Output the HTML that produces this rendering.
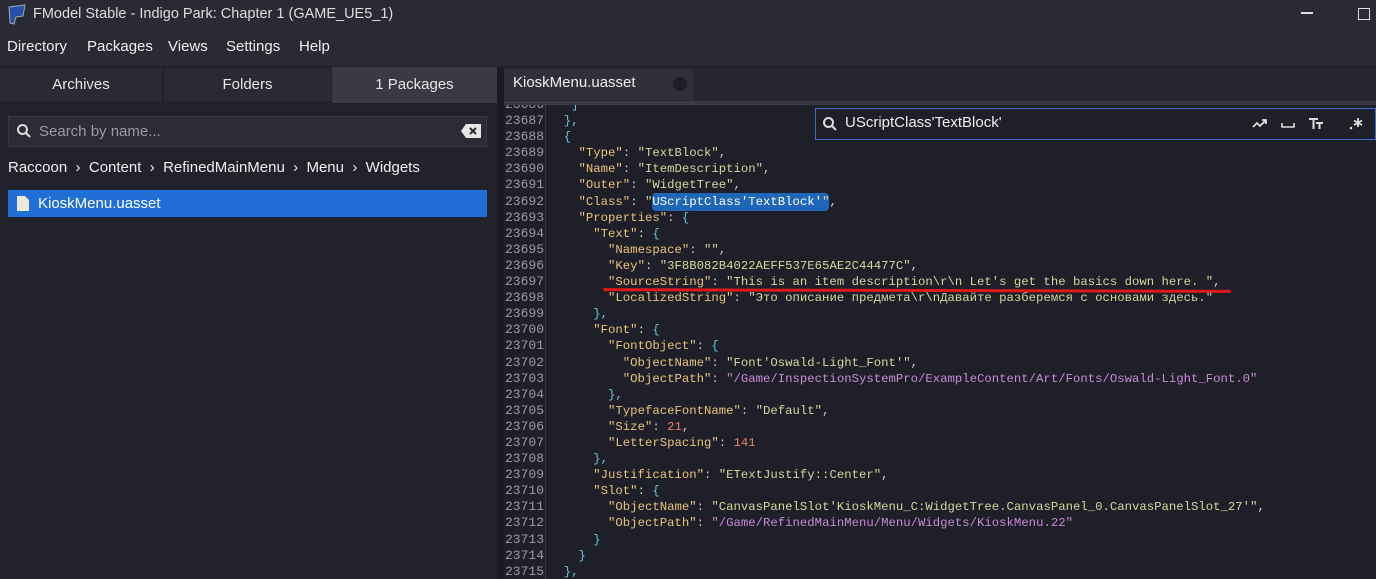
<!DOCTYPE html>
<html><head><meta charset="utf-8"><style>
*{margin:0;padding:0;box-sizing:border-box}
body{width:1376px;height:579px;overflow:hidden;background:#22222c;font-family:"Segoe UI","Liberation Sans",sans-serif;color:#e6e6e6;position:relative}
.abs{position:absolute}
.title{left:0;top:0;width:1376px;height:31px;background:#2a2a35}
.menu{left:0;top:31px;width:1376px;height:35px;background:#2a2a35}
.menu span{position:absolute;top:7px;font-size:15px;color:#eee}
.left{left:0;top:68px;width:497px;height:511px;background:#22222c}
.tab{position:absolute;top:0;height:33px;font-size:15px;text-align:center;line-height:33px}
.code{font-family:"Liberation Mono",monospace;font-size:12.3px;white-space:pre;line-height:16.1px}
.k{color:#e8c47a}.s{color:#d6d69c}.p{color:#c98ad6}.n{color:#e4806a}.b{color:#6ac4dc}.w{color:#ccc}
</style></head><body>
<div class="abs title">
<svg class="abs" style="left:6px;top:4px" width="22" height="22" viewBox="0 0 22 22"><path d="M3 3 L19 1 L17 12 L10 13 L8 20 L4 19 Z" fill="#2a4fa8" stroke="#9aa" stroke-width="1"/></svg>
<div class="abs" style="left:33px;top:6px;font-size:14.5px;color:#ddd">FModel Stable - Indigo Park: Chapter 1 (GAME_UE5_1)</div>
<div class="abs" style="left:1301px;top:12px;width:12px;height:1.5px;background:#ddd"></div>
<div class="abs" style="left:1358px;top:8px;width:12px;height:12px;border:1.5px solid #ddd"></div>
</div>
<div class="abs menu">
<span style="left:7px">Directory</span><span style="left:87px">Packages</span><span style="left:168px">Views</span><span style="left:226px">Settings</span><span style="left:299px">Help</span>
</div>
<div class="abs left">
<div class="tab" style="left:0;width:162px;background:#2a2a35">Archives</div>
<div class="tab" style="left:164px;width:167px;background:#2a2a35">Folders</div>
<div class="tab" style="left:332px;width:165px;background:#3a3a46;height:36px;top:-1px;line-height:36px">1 Packages</div>
<div class="abs" style="left:8px;top:48px;width:479px;height:31px;background:#2c2c37;border:1px solid #3a3a45"></div>
<svg class="abs" style="left:16px;top:55px" width="16" height="16" viewBox="0 0 16 16"><circle cx="6.5" cy="6.5" r="4.5" fill="none" stroke="#ddd" stroke-width="2"/><path d="M10 10 L14 14" stroke="#ddd" stroke-width="2"/></svg>
<div class="abs" style="left:39px;top:55px;font-size:15px;color:#9a9aa2">Search by name...</div>
<svg class="abs" style="left:461px;top:56px" width="20" height="14" viewBox="0 0 20 14"><path d="M5 0 H20 V14 H5 L0 7 Z" fill="#e6e6e6"/><path d="M9 4 L15 10 M15 4 L9 10" stroke="#2c2c37" stroke-width="2"/></svg>
<div class="abs" style="left:8px;top:91px;font-size:15px;color:#eee">Raccoon &nbsp;›&nbsp; Content &nbsp;›&nbsp; RefinedMainMenu &nbsp;›&nbsp; Menu &nbsp;›&nbsp; Widgets</div>
<div class="abs" style="left:8px;top:122px;width:479px;height:27px;background:#1f6fd6"></div>
<svg class="abs" style="left:16px;top:127px" width="14" height="17" viewBox="0 0 14 17"><path d="M1 1 H9 L13 5 V16 H1 Z" fill="#eee8d8"/></svg>
<div class="abs" style="left:38px;top:127px;font-size:15px;color:#fff">KioskMenu.uasset</div>
</div>
<div class="abs" style="left:497px;top:68px;width:7px;height:511px;background:#1a1a22"></div>
<div class="abs" style="left:504px;top:68px;width:872px;height:33px;background:#262630"></div>
<div class="abs" style="left:504px;top:69px;width:189px;height:31px;background:#30303b"></div>
<div class="abs" style="left:513px;top:74px;font-size:15px;color:#eee">KioskMenu.uasset</div>
<div class="abs" style="left:673px;top:77px;width:14px;height:14px;border-radius:50%;background:#1e1e26"></div>
<div class="abs" style="left:504px;top:101px;width:872px;height:4px;background:#3a3a44"></div>
<div class="abs" style="left:504px;top:105px;width:872px;height:474px;background:#1f1f2a;overflow:hidden">
<div class="abs" style="left:41px;top:0;width:1px;height:474px;border-left:1px dotted #444"></div>
<div class="abs code" style="left:0;top:-8px;width:40px;text-align:right;color:#9a9aa2;font-size:13px">23686
23687
23688
23689
23690
23691
23692
23693
23694
23695
23696
23697
23698
23699
23700
23701
23702
23703
23704
23705
23706
23707
23708
23709
23710
23711
23712
23713
23714
23715</div>
<div class="abs" style="left:148px;top:88px;width:177px;height:18px;background:#1f66b8;border-radius:4px"></div>
<div class="abs code" style="left:45px;top:-8px"><span class="b">   ]</span>
<span class="b">  },</span>
<span class="b">  {</span>
    <span class="k">"Type"</span><span class="w">: </span><span class="s">"TextBlock"</span><span class="w">,</span>
    <span class="k">"Name"</span><span class="w">: </span><span class="s">"ItemDescription"</span><span class="w">,</span>
    <span class="k">"Outer"</span><span class="w">: </span><span class="s">"WidgetTree"</span><span class="w">,</span>
    <span class="k">"Class"</span><span class="w">: </span><span class="s">"<span style="color:#fff">UScriptClass'TextBlock'</span>"</span><span class="w">,</span>
    <span class="k">"Properties"</span><span class="w">: </span><span class="b">{</span>
      <span class="k">"Text"</span><span class="w">: </span><span class="b">{</span>
        <span class="k">"Namespace"</span><span class="w">: </span><span class="s">""</span><span class="w">,</span>
        <span class="k">"Key"</span><span class="w">: </span><span class="s">"3F8B082B4022AEFF537E65AE2C44477C"</span><span class="w">,</span>
        <span class="k">"SourceString"</span><span class="w">: </span><span class="s">"This is an item description\r\n Let's get the basics down here. "</span><span class="w">,</span>
        <span class="k">"LocalizedString"</span><span class="w">: </span><span class="s">"Это описание предмета\r\nДавайте разберемся с основами здесь."</span>
<span class="b">      },</span>
      <span class="k">"Font"</span><span class="w">: </span><span class="b">{</span>
        <span class="k">"FontObject"</span><span class="w">: </span><span class="b">{</span>
          <span class="k">"ObjectName"</span><span class="w">: </span><span class="s">"Font'Oswald-Light_Font'"</span><span class="w">,</span>
          <span class="k">"ObjectPath"</span><span class="w">: </span><span class="p">"/Game/InspectionSystemPro/ExampleContent/Art/Fonts/Oswald-Light_Font.0"</span>
<span class="b">        },</span>
        <span class="k">"TypefaceFontName"</span><span class="w">: </span><span class="s">"Default"</span><span class="w">,</span>
        <span class="k">"Size"</span><span class="w">: </span><span class="n">21</span><span class="w">,</span>
        <span class="k">"LetterSpacing"</span><span class="w">: </span><span class="n">141</span>
<span class="b">      },</span>
      <span class="k">"Justification"</span><span class="w">: </span><span class="s">"ETextJustify::Center"</span><span class="w">,</span>
      <span class="k">"Slot"</span><span class="w">: </span><span class="b">{</span>
        <span class="k">"ObjectName"</span><span class="w">: </span><span class="s">"CanvasPanelSlot'KioskMenu_C:WidgetTree.CanvasPanel_0.CanvasPanelSlot_27'"</span><span class="w">,</span>
        <span class="k">"ObjectPath"</span><span class="w">: </span><span class="p">"/Game/RefinedMainMenu/Menu/Widgets/KioskMenu.22"</span>
<span class="b">      }</span>
<span class="b">    }</span>
<span class="b">  },</span></div>
</div>
<div class="abs" style="left:603px;top:289px;width:628px;height:3px;background:#e0181c;border-radius:2px;transform:rotate(0.15deg)"></div>
<div class="abs" style="left:815px;top:108px;width:561px;height:32px;background:#1f1f2a;border:1px solid #3b6fc4"></div>
<svg class="abs" style="left:822px;top:116px" width="16" height="16" viewBox="0 0 16 16"><circle cx="6.5" cy="6.5" r="4.5" fill="none" stroke="#ddd" stroke-width="2"/><path d="M10 10 L14 14" stroke="#ddd" stroke-width="2"/></svg>
<div class="abs" style="left:845px;top:114px;font-size:15px;color:#eee">UScriptClass'TextBlock'</div>
<svg class="abs" style="left:1252px;top:116px" width="120" height="16" viewBox="0 0 120 16"><path d="M1 11 L5 7 L8 10 L13 5 M10 4 H14 V8" fill="none" stroke="#ddd" stroke-width="1.8"/><path d="M30 7 V11 H42 V7" fill="none" stroke="#ddd" stroke-width="1.6"/><path d="M57 3 H66 M61.5 3 V13 M64 7 H71 M67.5 7 V13" stroke="#ddd" stroke-width="2"/><circle cx="99" cy="12" r="1.3" fill="#ddd"/><path d="M106 2 V11 M102 4.5 L110 9 M110 4.5 L102 9" stroke="#ddd" stroke-width="1.8"/></svg>
</body></html>
